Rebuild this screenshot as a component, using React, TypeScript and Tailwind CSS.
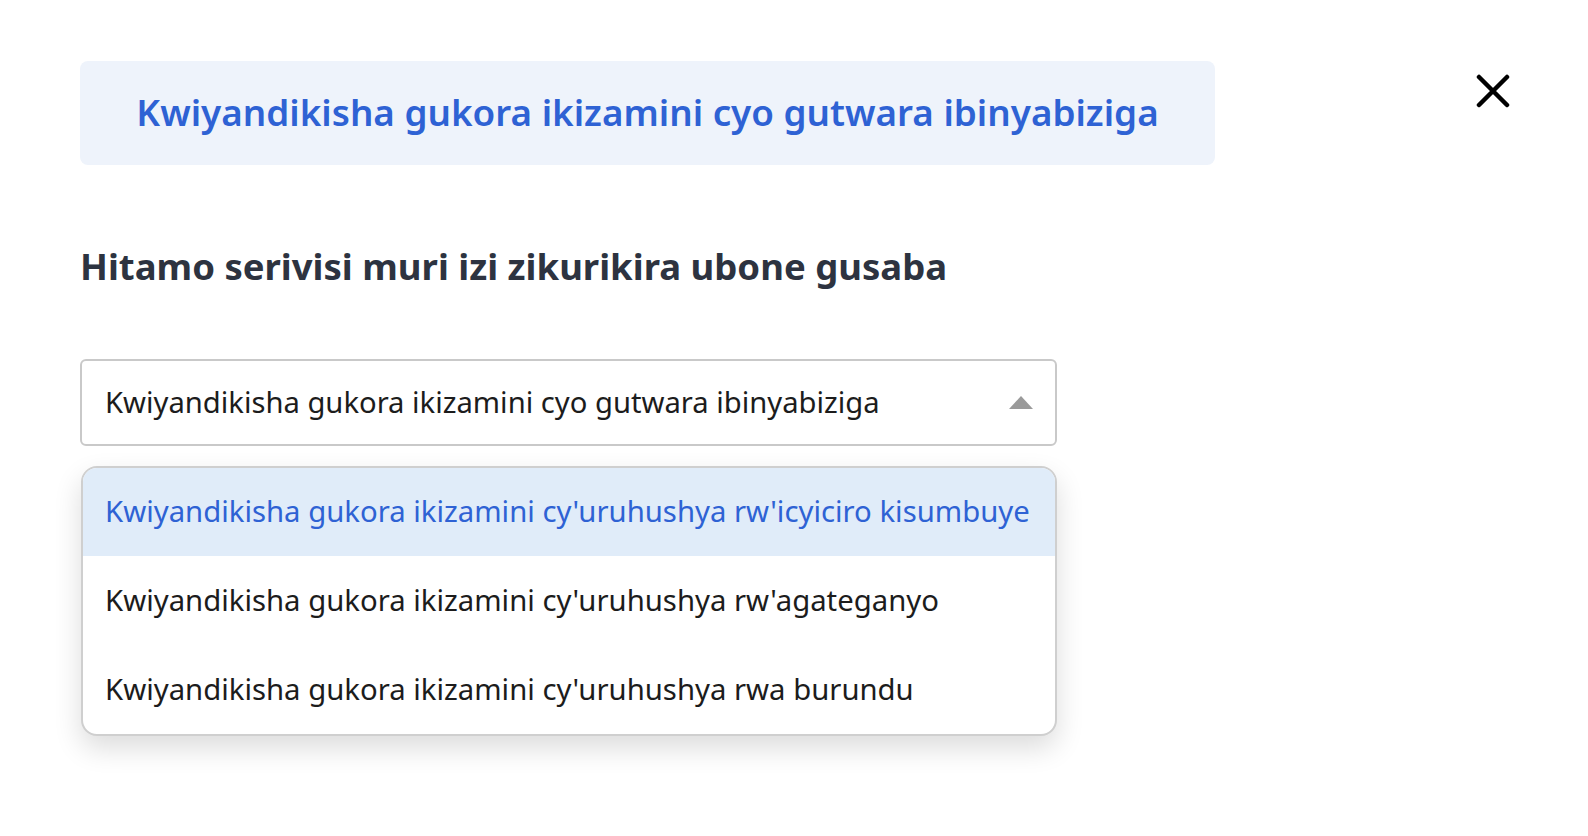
import React from "react";

export default function App() {
  const options = [
    "Kwiyandikisha gukora ikizamini cy'uruhushya rw'icyiciro kisumbuye",
    "Kwiyandikisha gukora ikizamini cy'uruhushya rw'agateganyo",
    "Kwiyandikisha gukora ikizamini cy'uruhushya rwa burundu",
  ];
  return (
    <div
      className="w-[1588px] h-[836px] bg-white relative"
      style={{ fontFamily: '"Noto Sans", "Open Sans", sans-serif' }}
    >
      <div className="pl-[80px] pt-[61px]">
        <div className="w-[1135px] h-[104px] bg-[#eef3fb] rounded-[8px] flex items-center justify-center">
          <span className="text-[#2e62d4] text-[36.8px] font-semibold">
            Kwiyandikisha gukora ikizamini cyo gutwara ibinyabiziga
          </span>
        </div>
        <div className="mt-[76px] text-[36.5px] font-bold text-[#2d3340] leading-[50px]">
          Hitamo serivisi muri izi zikurikira ubone gusaba
        </div>
        <div className="mt-[68px] w-[977px] h-[87px] border-2 border-[#c9c9c9] rounded-[6px] flex items-center pl-[23px] pr-[22px]">
          <span className="flex-1 text-[29.2px] text-[#1c1c1c]">
            Kwiyandikisha gukora ikizamini cyo gutwara ibinyabiziga
          </span>
          <svg width="24" height="13" viewBox="0 0 24 13">
            <polygon points="12,0 24,13 0,13" fill="#9a9a9a" />
          </svg>
        </div>
        <div className="mt-[20px] ml-[1px] w-[976px] border-2 border-[#cfcfcf] rounded-[16px] overflow-hidden bg-white shadow-[0_12px_28px_rgba(0,0,0,0.14)]">
          {options.map((o, i) => (
            <div
              key={i}
              className={
                i === 0
                  ? "h-[88px] flex items-center pl-[22px] bg-[#e0ecf9] text-[#2e62d4] text-[29.3px]"
                  : "h-[89px] flex items-center pl-[22px] text-[#1c1c1c] text-[29.3px]"
              }
            >
              {o}
            </div>
          ))}
        </div>
      </div>
      <div className="absolute left-[1476px] top-[74px]">
        <svg width="34" height="34" viewBox="0 0 34 34">
          <path d="M3 3 L31 31 M31 3 L3 31" stroke="#000" strokeWidth="4.5" strokeLinecap="round" />
        </svg>
      </div>
    </div>
  );
}
